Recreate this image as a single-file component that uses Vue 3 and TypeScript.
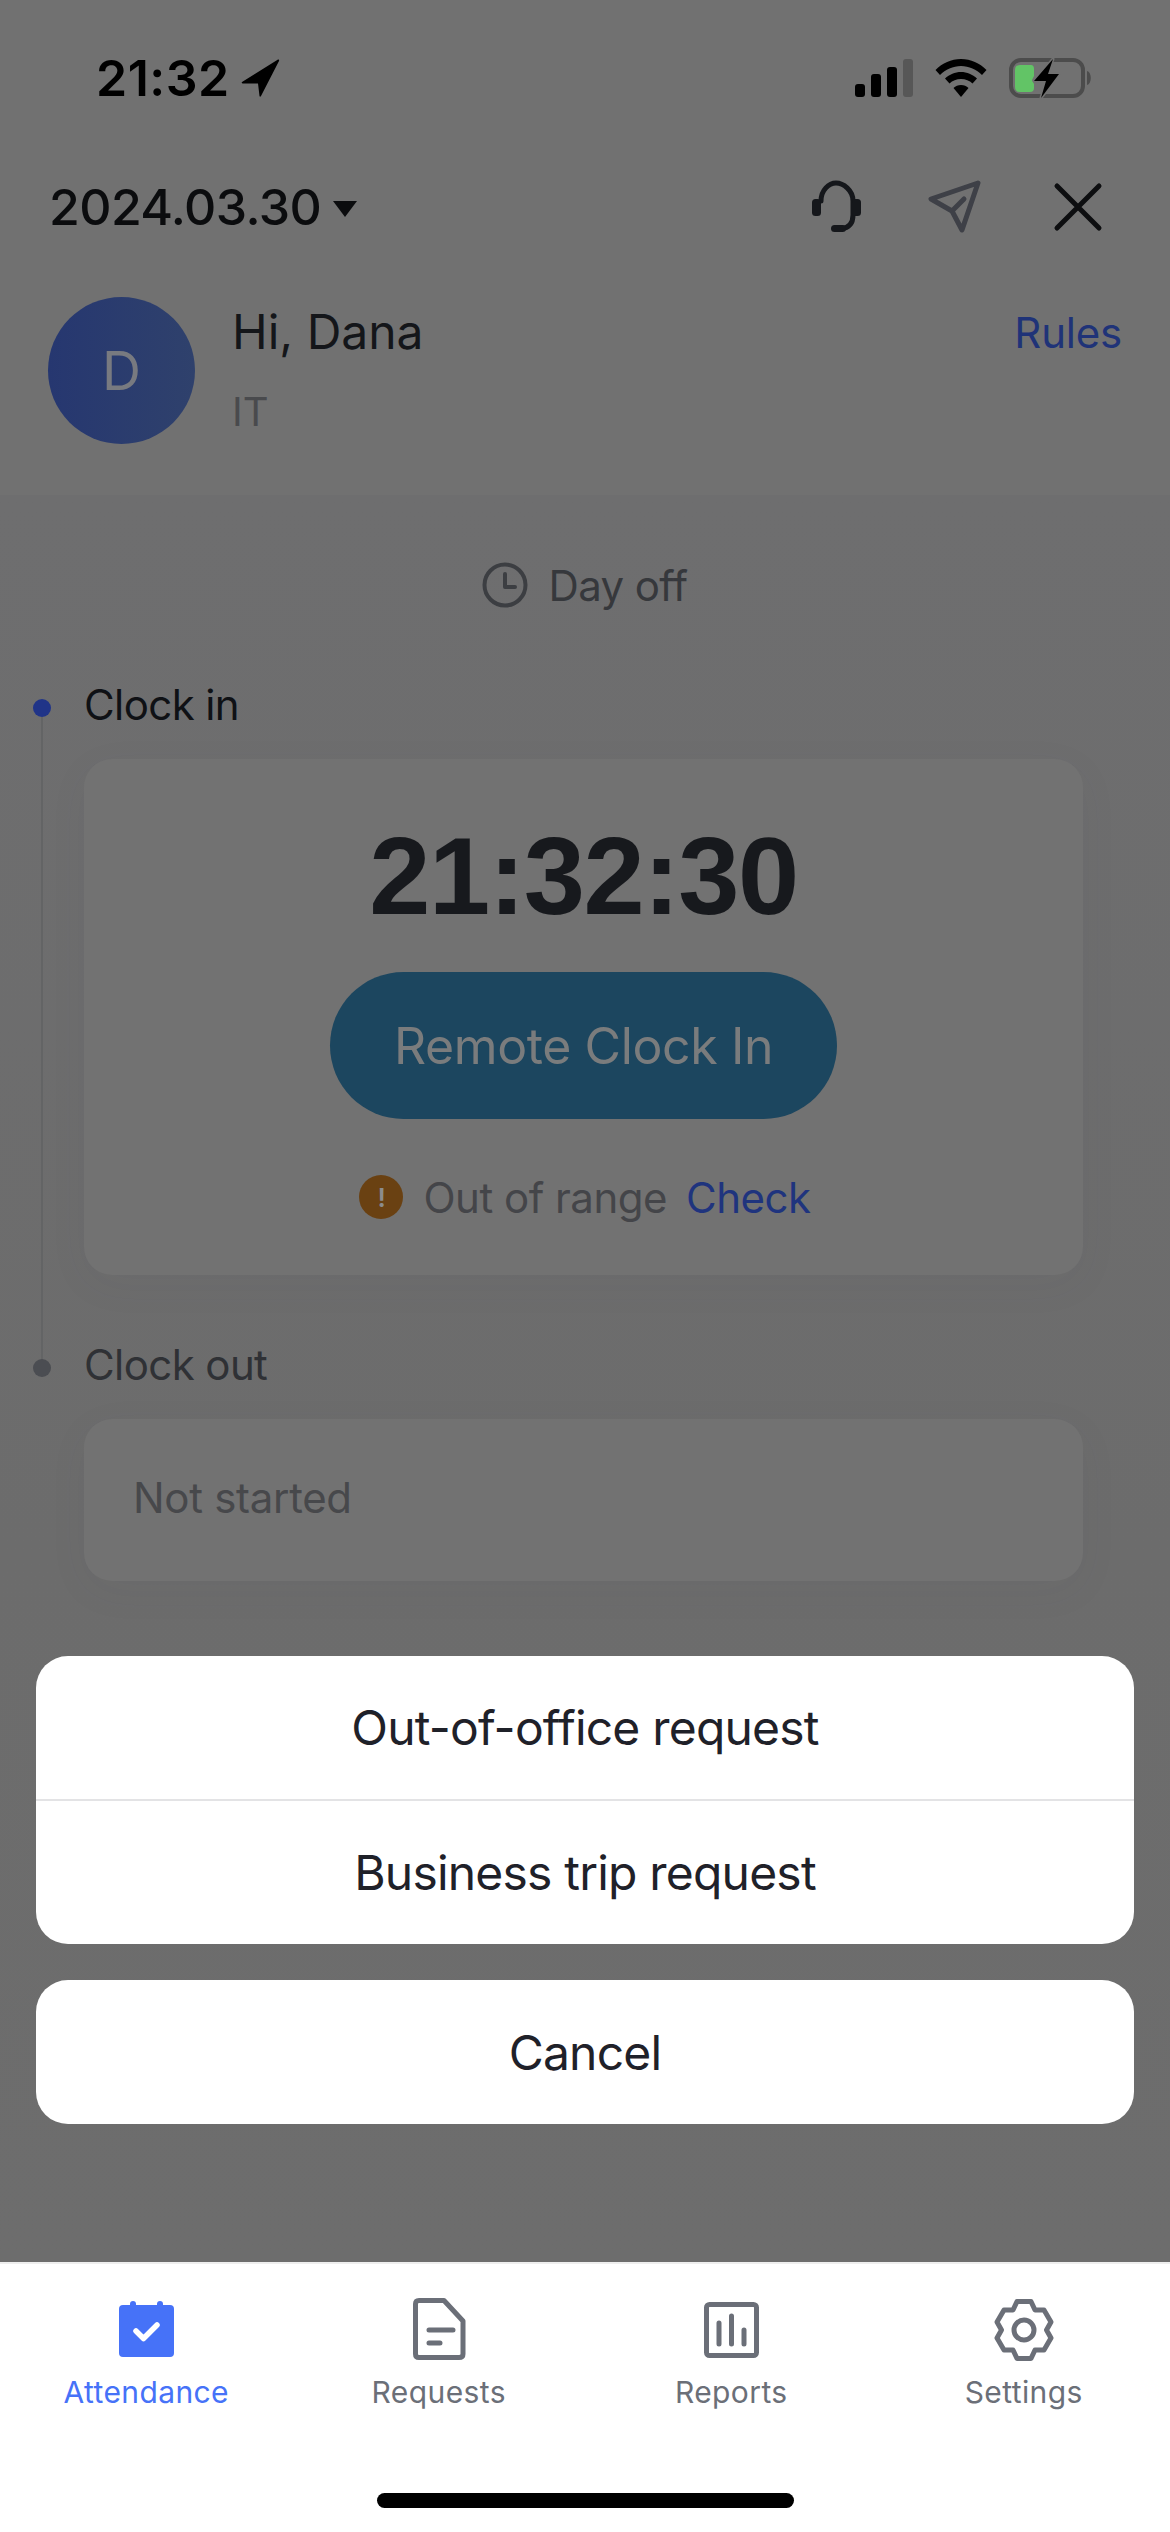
<script setup lang="ts">
const tabs = [
  { label: 'Attendance', active: true },
  { label: 'Requests', active: false },
  { label: 'Reports', active: false },
  { label: 'Settings', active: false },
]
</script>

<template>
  <div class="page">
    <header class="header">
      <div class="status">
        <div class="status-left">
          <span class="clock">21:32</span>
          <svg width="40" height="40" viewBox="0 0 40 40"><path d="M38 1.500 L2 24 Q1 25.500 3 25.500 L18 25.500 L19.500 38 Q20 39.500 21 38 L39 3 Q39.500 1 38 1.500 Z" fill="#000" /></svg>
        </div>
        <div class="status-right">
          <svg width="58" height="38" viewBox="0 0 58 38">
            <rect x="0" y="25" width="10" height="13" rx="3" fill="#000" />
            <rect x="16" y="15" width="10" height="23" rx="3" fill="#000" />
            <rect x="32" y="8" width="10" height="30" rx="3" fill="#000" />
            <rect x="48" y="0" width="10" height="38" rx="3" fill="#575757" />
          </svg>
          <svg width="52" height="38" viewBox="0 0 52 38">
            <path d="M26 0 C16 0 7.500 4 0.500 11 L5 16 C10.500 10.500 18 7 26 7 C34 7 41.500 10.500 47 16 L51.500 11 C44.500 4 36 0 26 0 Z" fill="#000" />
            <path d="M26 13 C20 13 14.500 15.500 10 19.500 L14.500 24.500 C17.500 21.500 21.500 20 26 20 C30.500 20 34.500 21.500 37.500 24.500 L42 19.500 C37.500 15.500 32 13 26 13 Z" fill="#000" />
            <path d="M26 26 C23 26 20.500 27 18.500 29 L26 38 L33.500 29 C31.500 27 29 26 26 26 Z" fill="#000" />
          </svg>
          <svg width="84" height="42" viewBox="0 0 84 42">
            <rect x="2" y="3" width="72" height="36" rx="10" fill="none" stroke="#4c4c4c" stroke-width="4" />
            <path d="M78 14 C83 15 83 27 78 28 Z" fill="#4c4c4c" />
            <path d="M11 8 L22 8 Q25 8 25 12 L25 19 L23 23 L25 27 L25 31 Q25 35 21 35 L11 35 Q6 35 6 30 L6 13 Q6 8 11 8 Z" fill="#62c466" />
            <path d="M44 2 L25 24 L37 24 L32 41 L50 17 L39 17 Z" fill="#000" stroke="#717171" stroke-width="3" paint-order="stroke" stroke-linejoin="round" />
          </svg>
        </div>
      </div>

      <div class="topbar">
        <div class="date">
          <span>2024.03.30</span>
          <i class="caret"></i>
        </div>
        <div class="top-icons">
          <svg width="60" height="60" viewBox="0 0 60 60">
            <path d="M17 24 C17 13 25 6 32 6 C39 6 49 13 49 24 L49 38 C49 46 45 51 37 52" fill="none" stroke="#15171b" stroke-width="5" stroke-linecap="round" />
            <rect x="8" y="22" width="9" height="17" rx="3.500" fill="#15171b" />
            <rect x="48" y="22" width="9" height="17" rx="3.500" fill="#15171b" />
            <rect x="27" y="48" width="15" height="7" rx="3.500" fill="#15171b" />
          </svg>
          <svg width="60" height="60" viewBox="0 0 60 60">
            <path d="M52 6 L5 22 L26 34 L36 53 Z M26 34 L38 22" fill="none" stroke="#3e4047" stroke-width="5" stroke-linejoin="round" stroke-linecap="round" />
          </svg>
          <svg width="60" height="60" viewBox="0 0 60 60">
            <path d="M9 9 L51 51 M51 9 L9 51" fill="none" stroke="#0d0e10" stroke-width="5" stroke-linecap="round" />
          </svg>
        </div>
      </div>

      <div class="user">
        <div class="avatar">D</div>
        <div class="who">
          <div class="hi">Hi, Dana</div>
          <div class="dept">IT</div>
        </div>
        <a class="rules">Rules</a>
      </div>
    </header>

    <main class="body">
      <div class="dayoff">
        <svg width="46" height="46" viewBox="0 0 46 46">
          <circle cx="23" cy="23" r="20.500" fill="none" stroke="#3c3e42" stroke-width="4" />
          <path d="M23 12 L23 25 L33 25" fill="none" stroke="#3c3e42" stroke-width="4" stroke-linecap="round" stroke-linejoin="round" />
        </svg>
        <span>Day off</span>
      </div>

      <section class="step step-in">
        <div class="rail">
          <i class="dot dot-on"></i>
          <i class="line"></i>
        </div>
        <div class="step-main">
          <div class="step-label">Clock in</div>
          <div class="card card-in">
            <div class="time">21:32:30</div>
            <div class="remote">Remote Clock In</div>
            <div class="range">
              <span class="warn">!</span>
              <span class="range-text">Out of range</span>
              <a class="check">Check</a>
            </div>
          </div>
        </div>
      </section>

      <section class="step">
        <div class="rail">
          <i class="stub"></i>
          <i class="dot dot-off"></i>
        </div>
        <div class="step-main">
          <div class="step-label label-off">Clock out</div>
          <div class="card card-out">Not started</div>
        </div>
      </section>
    </main>

    <nav class="tabs">
      <div v-for="(t, i) in tabs" :key="t.label" class="tab" :class="{ active: t.active }">
        <svg width="64" height="64" viewBox="0 0 64 64" class="tab-icon">
          <template v-if="i === 0">
            <rect x="5" y="7" width="55" height="52" rx="4" fill="#4672f8" />
            <rect x="16" y="3" width="6" height="8" rx="3" fill="#4672f8" />
            <rect x="43" y="3" width="6" height="8" rx="3" fill="#4672f8" />
            <path d="M22 33 L29.500 40.500 L43 27" fill="none" stroke="#fff" stroke-width="5.500" stroke-linecap="round" stroke-linejoin="round" />
          </template>
          <template v-else-if="i === 1">
            <path d="M12 2.500 L37 2.500 L56 23 L56 56 Q56 59.500 52 59.500 L12 59.500 Q8.500 59.500 8.500 56 L8.500 6 Q8.500 2.500 12 2.500 Z" fill="none" stroke="#6b6f78" stroke-width="5" stroke-linejoin="round" />
            <path d="M22 32 L46 32 M22 45 L33 45" fill="none" stroke="#6b6f78" stroke-width="5" stroke-linecap="round" />
          </template>
          <template v-else-if="i === 2">
            <rect x="7.500" y="6.500" width="50" height="51" rx="3" fill="none" stroke="#6b6f78" stroke-width="5" />
            <path d="M20 25 L20 46 M32.500 18 L32.500 46 M45 32 L45 46" fill="none" stroke="#6b6f78" stroke-width="5" stroke-linecap="round" />
          </template>
          <template v-else>
            <path d="M25 3.500 L39 3.500 L43 12 L52 12 L59 24 L54.500 32 L59 40 L52 52 L43 52 L39 60.500 L25 60.500 L21 52 L12 52 L5 40 L9.500 32 L5 24 L12 12 L21 12 Z" fill="none" stroke="#6b6f78" stroke-width="5" stroke-linejoin="round" />
            <circle cx="32" cy="32" r="10" fill="none" stroke="#6b6f78" stroke-width="5" />
          </template>
        </svg>
        <span class="tab-label">{{ t.label }}</span>
      </div>
      <i class="home-bar"></i>
    </nav>

    <div class="sheet">
      <div class="sheet-group">
        <div class="sheet-item first">Out-of-office request</div>
        <div class="sheet-item divided">Business trip request</div>
      </div>
      <div class="sheet-group">
        <div class="sheet-item">Cancel</div>
      </div>
    </div>
  </div>
</template>

<style>
html, body { margin: 0; padding: 0; background: #6d6d6d; }
</style>

<style scoped>
.page {
  position: relative;
  width: 1170px;
  height: 2532px;
  display: flex;
  flex-direction: column;
  overflow: hidden;
  font-family: Inter, "Liberation Sans", sans-serif;
  background: #6d6d6d;
}
.header { height: 495px; background: #717171; flex: none; }
.status {
  height: 156px;
  display: flex;
  align-items: center;
  justify-content: space-between;
  padding: 0 77px 0 96px;
}
.status-left { display: flex; align-items: center; gap: 10px; }
.clock { font-size: 50px; font-weight: 600; letter-spacing: 0.5px; color: #000; line-height: 56px; }
.status-right { display: flex; align-items: center; gap: 22px; }
.topbar {
  height: 102px;
  display: flex;
  align-items: center;
  justify-content: space-between;
  padding: 0 62px 0 49px;
}
.date { display: flex; align-items: center; gap: 12px; font-size: 50px; font-weight: 500; letter-spacing: -0.6px; color: #0b0c0e; }
.caret { width: 0; height: 0; border-left: 12px solid transparent; border-right: 12px solid transparent; border-top: 16px solid #0b0c0e; margin-top: 4px; }
.top-icons { display: flex; gap: 62px; align-items: center; }
.user { display: flex; margin-top: 39px; padding: 0 50px 0 48px; align-items: flex-start; }
.avatar {
  width: 147px;
  height: 147px;
  border-radius: 50%;
  background: linear-gradient(90deg, #263770, #2f416c);
  color: #787a80;
  font-size: 54px;
  display: flex;
  align-items: center;
  justify-content: center;
}
.who { margin-left: 37px; flex: 1; }
.hi { font-size: 48px; line-height: 58px; margin-top: 6px; color: #14161a; }
.dept { font-size: 40px; line-height: 48px; margin-top: 27px; color: #494a4d; }
.rules { font-size: 42px; line-height: 58px; margin-top: 7px; margin-right: -2px; letter-spacing: -0.2px; color: #1f3378; }

.body {
  flex: 1;
  background: linear-gradient(180deg, #6e6e6f 0%, #6c6c6c 60%, #6d6d6d 100%);
}
.dayoff {
  height: 180px;
  display: flex;
  align-items: center;
  justify-content: center;
  gap: 20px;
  font-size: 42px;
  letter-spacing: -0.6px;
  color: #36383c;
}
.step { display: grid; grid-template-columns: 84px 1fr; padding-right: 87px; }
.step-in { margin-top: 5px; padding-bottom: 65px; }
.rail { display: flex; flex-direction: column; align-items: flex-start; padding-left: 33px; box-sizing: border-box; }
.dot { width: 18px; height: 18px; border-radius: 50%; flex: none; }
.step-in .dot { margin-top: 19px; }
.dot-on { background: #203488; }
.dot-off { background: #4b4d52; }
.line { flex: 1; width: 2px; margin-left: 8px; margin-bottom: -65px; background: #636465; }
.stub { width: 2px; height: 19px; margin-left: 8px; background: #636465; flex: none; }
.step-label { font-size: 42px; line-height: 50px; letter-spacing: -0.6px; color: #0f1115; }
.label-off { color: #2f3135; }
.card { background: #727272; border-radius: 28px; margin-top: 29px; box-shadow: 0 10px 40px rgba(70, 80, 100, 0.05); }
.card-in {
  height: 516px;
  box-sizing: border-box;
  padding-top: 62px;
  display: flex;
  flex-direction: column;
  align-items: center;
}
.time { font-family: "Liberation Sans", sans-serif; font-size: 110px; font-weight: 700; line-height: 110px; letter-spacing: -1.5px; color: #17191d; }
.remote {
  margin-top: 41px;
  width: 507px;
  height: 147px;
  border-radius: 74px;
  background: #1c465f;
  color: #7a7c7d;
  font-size: 50px;
  letter-spacing: -0.4px;
  display: flex;
  align-items: center;
  justify-content: center;
}
.range { margin-top: 53px; height: 50px; display: flex; align-items: center; font-size: 42px; letter-spacing: -0.5px; }
.warn {
  width: 44px;
  height: 44px;
  border-radius: 50%;
  background: #6a4112;
  color: #8c8c8c;
  font-size: 26px;
  font-weight: 600;
  display: flex;
  align-items: center;
  justify-content: center;
  margin-right: 20px;
  margin-left: 3px;
}
.range-text { color: #444549; }
.check { color: #1f347e; margin-left: 19px; }
.card-out {
  height: 162px;
  box-sizing: border-box;
  padding: 0 0 6px 49px;
  display: flex;
  align-items: center;
  font-size: 42px;
  letter-spacing: -0.3px;
  color: #47484b;
}

.tabs {
  position: relative;
  flex: none;
  height: 270px;
  box-sizing: border-box;
  border-top: 2px solid #eeeeee;
  background: #fff;
  display: grid;
  grid-template-columns: repeat(4, 1fr);
  align-items: start;
}
.tab { display: flex; flex-direction: column; align-items: center; padding-top: 34px; color: #6b6f78; }
.tab.active { color: #4672f8; }
.tab-icon { display: block; }
.tab-label { font-size: 30px; line-height: 40px; margin-top: 10px; letter-spacing: 0.4px; }
.home-bar {
  position: absolute;
  left: 377px;
  top: 229px;
  width: 417px;
  height: 15px;
  border-radius: 8px;
  background: #000;
}

.sheet {
  position: absolute;
  left: 36px;
  right: 36px;
  top: 1656px;
  display: flex;
  flex-direction: column;
  gap: 36px;
}
.sheet-group { background: #fff; border-radius: 32px; overflow: hidden; }
.sheet-item {
  height: 144px;
  box-sizing: border-box;
  display: flex;
  align-items: center;
  justify-content: center;
  font-size: 48px;
  letter-spacing: -0.8px;
  color: #1f2129;
}
.first { height: 143px; }
.divided { height: 145px; border-top: 2px solid #e3e3e5; }
</style>
